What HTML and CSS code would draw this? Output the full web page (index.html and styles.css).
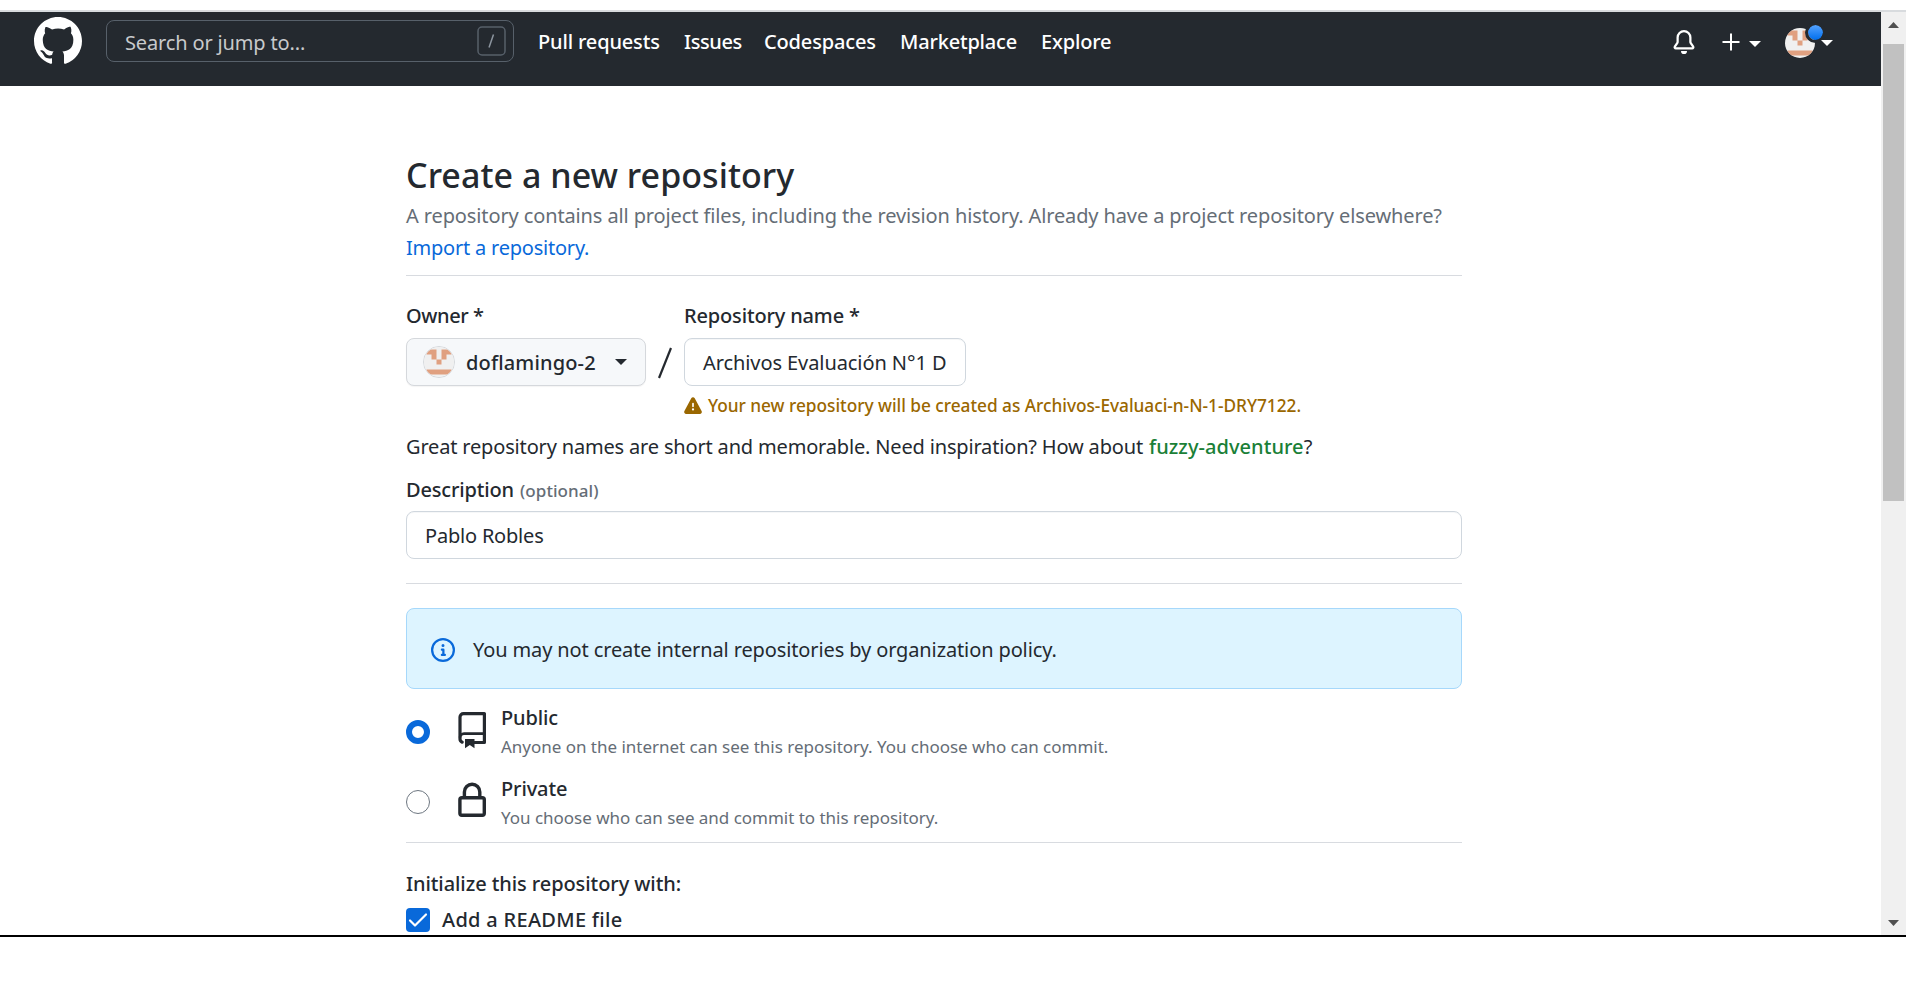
FILE: index.html
```html
<!DOCTYPE html>
<html lang="en">
<head>
<meta charset="utf-8">
<title>Create a New Repository</title>
<link rel="stylesheet" href="styles.css">
</head>
<body>
<svg class="defs" width="0" height="0" aria-hidden="true">
  <symbol id="identicon" viewBox="0 0 30 30">
    <rect width="30" height="30" fill="#f0f0f0"/>
    <path fill="#e0a080" d="M2.5 2.500h10v10h-5v-5h-5zM17.500 2.500h10v5h-5v5h-5zM12.500 12.500h5v5h-5zM2.500 22.500h25v5h-25zM7.500 7.500h5v5h-5z"/>
  </symbol>
</svg>
<div class="window">
  <div class="page">
    <header class="topbar">
      <svg class="logo" viewBox="0 0 16 16" width="48" height="48" fill="#fff"><path d="M8 0C3.58 0 0 3.580 0 8c0 3.540 2.290 6.530 5.470 7.590.4.070.550-.170.550-.380 0-.190-.010-.820-.010-1.490-2.010.370-2.530-.490-2.690-.940-.090-.230-.480-.940-.820-1.130-.280-.150-.680-.520-.010-.530.630-.010 1.080.580 1.230.820.720 1.210 1.870.870 2.330.660.070-.520.280-.870.510-1.070-1.780-.2-3.640-.890-3.640-3.950 0-.870.310-1.590.820-2.150-.080-.2-.360-1.020.080-2.120 0 0 .670-.210 2.200.820.640-.180 1.320-.270 2-.270s1.360.090 2 .270c1.530-1.040 2.200-.820 2.200-.820.440 1.100.160 1.920.080 2.120.510.560.820 1.270.820 2.150 0 3.070-1.870 3.750-3.650 3.950.290.250.540.730.540 1.480 0 1.070-.010 1.930-.010 2.200 0 .210.150.460.550.380A8.010 8.010 0 0 0 16 8c0-4.420-3.580-8-8-8z"/></svg>
      <div class="search">
        <span class="search-text">Search or jump to...</span>
        <svg class="slash-key" width="29" height="30" viewBox="0 0 29 30" fill="none" stroke="#57606a"><rect x="1" y="1" width="27" height="28" rx="4" stroke-width="1.500"/><path d="M12 21.500l4.500-13" stroke="#8c959f" stroke-width="1.500"/></svg>
      </div>
      <nav class="nav">
        <a class="nav-pulls">Pull requests</a>
        <a class="nav-issues">Issues</a>
        <a class="nav-codespaces">Codespaces</a>
        <a class="nav-market">Marketplace</a>
        <a class="nav-explore">Explore</a>
      </nav>
      <div class="tools">
        <svg class="bell" viewBox="0 0 16 16" width="24" height="24" fill="#fff"><path d="M8 16a2 2 0 0 0 1.985-1.750c.017-.137-.097-.250-.235-.250h-3.500c-.138 0-.252.113-.235.250A2 2 0 0 0 8 16z"/><path fill-rule="evenodd" d="M8 1.500A3.500 3.500 0 0 0 4.500 5v2.947c0 .346-.102.683-.294.970l-1.703 2.556a.018.018 0 0 0-.003.010l.001.006c0 .002.002.004.004.006a.017.017 0 0 0 .006.004l.007.001h10.964l.007-.001a.016.016 0 0 0 .006-.004.016.016 0 0 0 .004-.006l.001-.007a.017.017 0 0 0-.003-.010l-1.703-2.554a1.750 1.750 0 0 1-.294-.970V5A3.500 3.500 0 0 0 8 1.500zM3 5a5 5 0 0 1 10 0v2.947c0 .050.015.098.042.139l1.703 2.555A1.518 1.518 0 0 1 13.482 13H2.518a1.518 1.518 0 0 1-1.263-2.360l1.703-2.554A.250.250 0 0 0 3 7.947V5z"/></svg>
        <svg class="plus" viewBox="0 0 18 18" width="18" height="18" stroke="#fff" stroke-width="2"><path d="M9 .5v17M.5 9h17"/></svg>
        <span class="caret caret-light"></span>
        <span class="avatar">
          <svg class="avatar-img" width="30" height="30"><use href="#identicon"/></svg>
          <span class="dot"></span>
        </span>
        <span class="caret caret-light caret-user"></span>
      </div>
    </header>

    <main class="content">
      <h1 class="title">Create a new repository</h1>
      <p class="lead">A repository contains all project files, including the revision history. Already have a project repository elsewhere?<br><a class="link">Import a repository.</a></p>
      <hr class="rule rule-head">

      <div class="fields">
        <div class="owner">
          <div class="label label-owner">Owner *</div>
          <div class="owner-btn">
            <svg class="owner-img" width="32" height="32"><use href="#identicon"/></svg>
            <span class="owner-name">doflamingo-2</span>
            <span class="caret caret-dark"></span>
          </div>
        </div>
        <svg class="divider-slash" width="14" height="32" viewBox="0 0 14 32" stroke="#24292f" stroke-width="2.200"><path d="M1 31L13 1"/></svg>
        <div class="repo">
          <div class="label">Repository name *</div>
          <div class="input repo-input">Archivos Evaluación N°1 D</div>
          <div class="warning">
            <svg viewBox="0 0 16 16" width="18" height="18" fill="#9a6700"><path fill-rule="evenodd" d="M6.457 1.047c.659-1.234 2.427-1.234 3.086 0l6.082 11.378A1.750 1.750 0 0 1 14.082 15H1.918a1.750 1.750 0 0 1-1.543-2.575L6.457 1.047zM9 11a1 1 0 1 1-2 0 1 1 0 0 1 2 0zm-.250-5.250a.750.750 0 0 0-1.500 0v2.500a.750.750 0 0 0 1.500 0v-2.500z"/></svg>
            <span>Your new repository will be created as Archivos-Evaluaci-n-N-1-DRY7122.</span>
          </div>
        </div>
      </div>

      <p class="hint">Great repository names are short and memorable. Need inspiration? How about <strong class="suggestion">fuzzy-adventure</strong>?</p>
      <div class="label label-desc">Description <span class="optional">(optional)</span></div>
      <div class="input desc-input">Pablo Robles</div>
      <hr class="rule rule-desc">

      <div class="flash">
        <svg viewBox="0 0 16 16" width="24" height="24" fill="#0969da"><path fill-rule="evenodd" d="M8 1.500a6.500 6.500 0 1 0 0 13 6.500 6.500 0 0 0 0-13zM0 8a8 8 0 1 1 16 0A8 8 0 0 1 0 8zm6.500-.250A.750.750 0 0 1 7.250 7h1a.750.750 0 0 1 .750.750v2.750h.250a.750.750 0 0 1 0 1.500h-2a.750.750 0 0 1 0-1.500h.250v-2h-.250a.750.750 0 0 1-.750-.750zM8 6a1 1 0 1 0 0-2 1 1 0 0 0 0 2z"/></svg>
        <span>You may not create internal repositories by organization policy.</span>
      </div>

      <div class="choice choice-public">
        <span class="radio radio-on"></span>
        <svg class="choice-icon" viewBox="0 0 36 38" width="36" height="38" fill="none" stroke="#24292f" stroke-width="3.200"><path stroke-linecap="round" stroke-linejoin="round" d="M20.500 31.500h9.900V2.600H9.500A3.500 3.500 0 0 0 6 6.100V28c0 1.500.8 2.600 2.200 3.200"/><path stroke-width="2.600" d="M6 26.500a4 3.800 0 0 1 4-3.900h20.400"/><path fill="#24292f" stroke="none" d="M11 28h9.500v9.200L15.800 34 11 37.200z"/></svg>
        <div class="choice-text">
          <div class="choice-title">Public</div>
          <div class="choice-note">Anyone on the internet can see this repository. You choose who can commit.</div>
        </div>
      </div>
      <div class="choice choice-private">
        <span class="radio"></span>
        <svg class="choice-icon" viewBox="0 0 36 36" width="36" height="36" fill="none" stroke="#24292f" stroke-width="3.400"><rect x="5.900" y="15.700" width="24.400" height="17.600" rx="2"/><path d="M10.400 15V10a7.700 7.700 0 0 1 15.400 0v5"/></svg>
        <div class="choice-text">
          <div class="choice-title">Private</div>
          <div class="choice-note">You choose who can see and commit to this repository.</div>
        </div>
      </div>
      <hr class="rule rule-choice">

      <div class="init-title">Initialize this repository with:</div>
      <div class="readme">
        <svg width="24" height="24" viewBox="0 0 24 24"><rect width="24" height="24" rx="4" fill="#0969da"/><path d="M4 12.500l5 5L20 6.500" fill="none" stroke="#fff" stroke-width="2.200" stroke-linecap="round" stroke-linejoin="round"/></svg>
        <span>Add a README file</span>
      </div>
    </main>
  </div>
  <div class="scrollbar">
    <svg width="11" height="6" viewBox="0 0 11 6" fill="#505050"><path d="M0 6L5.500 0 11 6z"/></svg>
    <div class="track"><div class="thumb"></div></div>
    <svg width="11" height="6" viewBox="0 0 11 6" fill="#505050"><path d="M0 0L5.500 6 11 0z"/></svg>
  </div>
</div>
</body>
</html>
```

FILE: styles.css
```css
* { box-sizing: border-box; }
body {
  margin: 0;
  padding-top: 10px;
  height: 981px;
  overflow: hidden;
  background: #fff;
  color: #24292f;
  font: 400 20px/30px "Noto Sans", "Open Sans", sans-serif;
  letter-spacing: -0.12px;
  white-space: nowrap;
}
svg { display: block; flex: none; }
.defs { position: absolute; }
p, h1 { margin: 0; }

.window {
  display: flex;
  width: 1906px;
  height: 927px;
  border-top: 2px solid #d8dbde;
  border-bottom: 2px solid #000;
}
.page { width: 1881px; height: 923px; overflow: hidden; }

/* top bar */
.topbar {
  display: flex;
  align-items: flex-start;
  height: 74px;
  padding: 5px 48px 0 34px;
  background: #24292f;
  color: #fff;
}
.search {
  display: flex;
  align-items: center;
  justify-content: space-between;
  width: 408px;
  height: 42px;
  margin: 3px 0 0 24px;
  padding: 0 7px 0 18px;
  border: 1px solid #57606a;
  border-radius: 8px;
}
.search-text { color: #c8cacc; letter-spacing: -0.15px; padding-top: 3px; }
.nav {
  display: flex;
  gap: 24px;
  margin: 10px 0 0 24px;
  font-weight: 500;
  letter-spacing: -0.16px;
}
.nav-pulls { width: 122px; }
.nav-issues { width: 56px; letter-spacing: -0.4px; }
.nav-codespaces { width: 112px; }
.nav-market { width: 117px; letter-spacing: -0.2px; }
.tools { display: flex; align-items: center; margin: 10px 0 0 auto; height: 30px; }
.plus { margin: 0 10px 0 27px; }
.caret { width: 0; height: 0; border: 6px solid transparent; border-bottom: 0; }
.caret-light { border-top-color: #fff; margin-top: 4px; }
.avatar { position: relative; margin: 2px 0 0 24px; width: 30px; height: 30px; }
.avatar-img { border-radius: 50%; }
.dot {
  position: absolute;
  left: 20px;
  top: -6px;
  width: 21px;
  height: 21px;
  border: 3px solid #24292f;
  border-radius: 50%;
  background: linear-gradient(#54a3ff, #006eed) padding-box;
}
.caret-user { position: relative; margin: 2px 0 0 6px; }

/* form */
.content { width: 1056px; margin-left: 406px; padding-top: 66px; }
.title { font-size: 34px; line-height: 46px; font-weight: 500; letter-spacing: 0.04px; }
.lead { color: #656d76; line-height: 32px; margin-top: 2px; }
.link { color: #0969da; letter-spacing: -0.22px; }
.rule { height: 1px; margin: 0; border: 0; background: #d8dbe0; }
.rule-head { margin-top: 11px; }
.label, .init-title, .choice-title { font-weight: 500; }

.fields { display: flex; padding-top: 25px; }
.owner { width: 240px; }
.label { height: 30px; letter-spacing: -0.16px; }
.label-owner { letter-spacing: -0.4px; }
.owner-btn {
  display: flex;
  align-items: center;
  height: 48px;
  margin-top: 7px;
  padding: 0 18px 0 16px;
  border: 1px solid #d5d8dc;
  border-radius: 8px;
  background: #f6f8fa;
  box-shadow: 0 1px 1px #1f23280d;
}
.owner-img { border-radius: 50%; border: 1px solid #d5d8dc; }
.owner-name { font-weight: 500; letter-spacing: 0.15px; margin-left: 11px; padding-top: 2px; }
.caret-dark { border-top-color: #24292f; margin-left: auto; }
.divider-slash { margin: 46px 12px 0; }
.input {
  height: 48px;
  padding: 0 18px;
  border: 1px solid #d0d7de;
  border-radius: 8px;
  background: #fff;
  box-shadow: inset 0 1px 0 #d0d7de33;
  line-height: 48px;
}
.repo-input { width: 282px; margin-top: 7px; letter-spacing: -0.08px; }
.warning {
  display: flex;
  align-items: center;
  gap: 6px;
  height: 30px;
  margin-top: 5px;
  color: #9a6700;
  font-size: 17.3px;
  font-weight: 500;
  letter-spacing: -0.03px;
}
.hint { margin-top: 11px; letter-spacing: -0.17px; }
.suggestion { color: #1a7f37; font-weight: 500; letter-spacing: 0.05px; margin-left: 1px; }
.label-desc { margin-top: 13px; }
.optional { color: #656d76; font-size: 17px; letter-spacing: 0.05px; margin-left: 1px; }
.desc-input { margin-top: 6px; letter-spacing: -0.2px; }
.rule-desc { margin-top: 24px; }

.flash {
  display: flex;
  align-items: center;
  gap: 18px;
  height: 81px;
  margin-top: 24px;
  padding: 2px 24px 0;
  border: 1px solid #a6d8fb;
  border-radius: 8px;
  background: #ddf4ff;
}

.choice { display: flex; align-items: flex-start; height: 71px; }
.choice-public { margin-top: 14px; }
.radio { width: 24px; height: 24px; border: 1px solid #6e7781; border-radius: 50%; margin-top: 16px; }
.radio-on { border: 6px solid #0969da; margin-top: 17px; }
.choice-icon { margin: 8px 7px 0 24px; }
.choice-private .choice-icon { margin-top: 8px; }
.choice-private { height: 68px; }
.choice-text { margin-left: 4px; }
.choice-title { line-height: 30px; }
.choice-note { color: #656d76; font-size: 17px; line-height: 27px; letter-spacing: -0.02px; }
.rule-choice { margin-top: 0; }
.init-title { margin-top: 26px; letter-spacing: -0.08px; }
.readme { display: flex; align-items: center; gap: 12px; height: 30px; margin-top: 6px; font-weight: 500; letter-spacing: 0.3px; }

/* scrollbar */
.scrollbar {
  display: flex;
  flex-direction: column;
  align-items: center;
  width: 25px;
  height: 923px;
  padding: 10px 2px 9px;
  background: #f0f0f0;
}
.track { flex: 1; align-self: stretch; padding-top: 16px; }
.thumb { height: 457px; background: #c1c1c1; }
.bell { margin-right: 0; }
.tools .bell { position: relative; left: 2px; }
.tools .plus { position: relative; left: 1px; }
```
